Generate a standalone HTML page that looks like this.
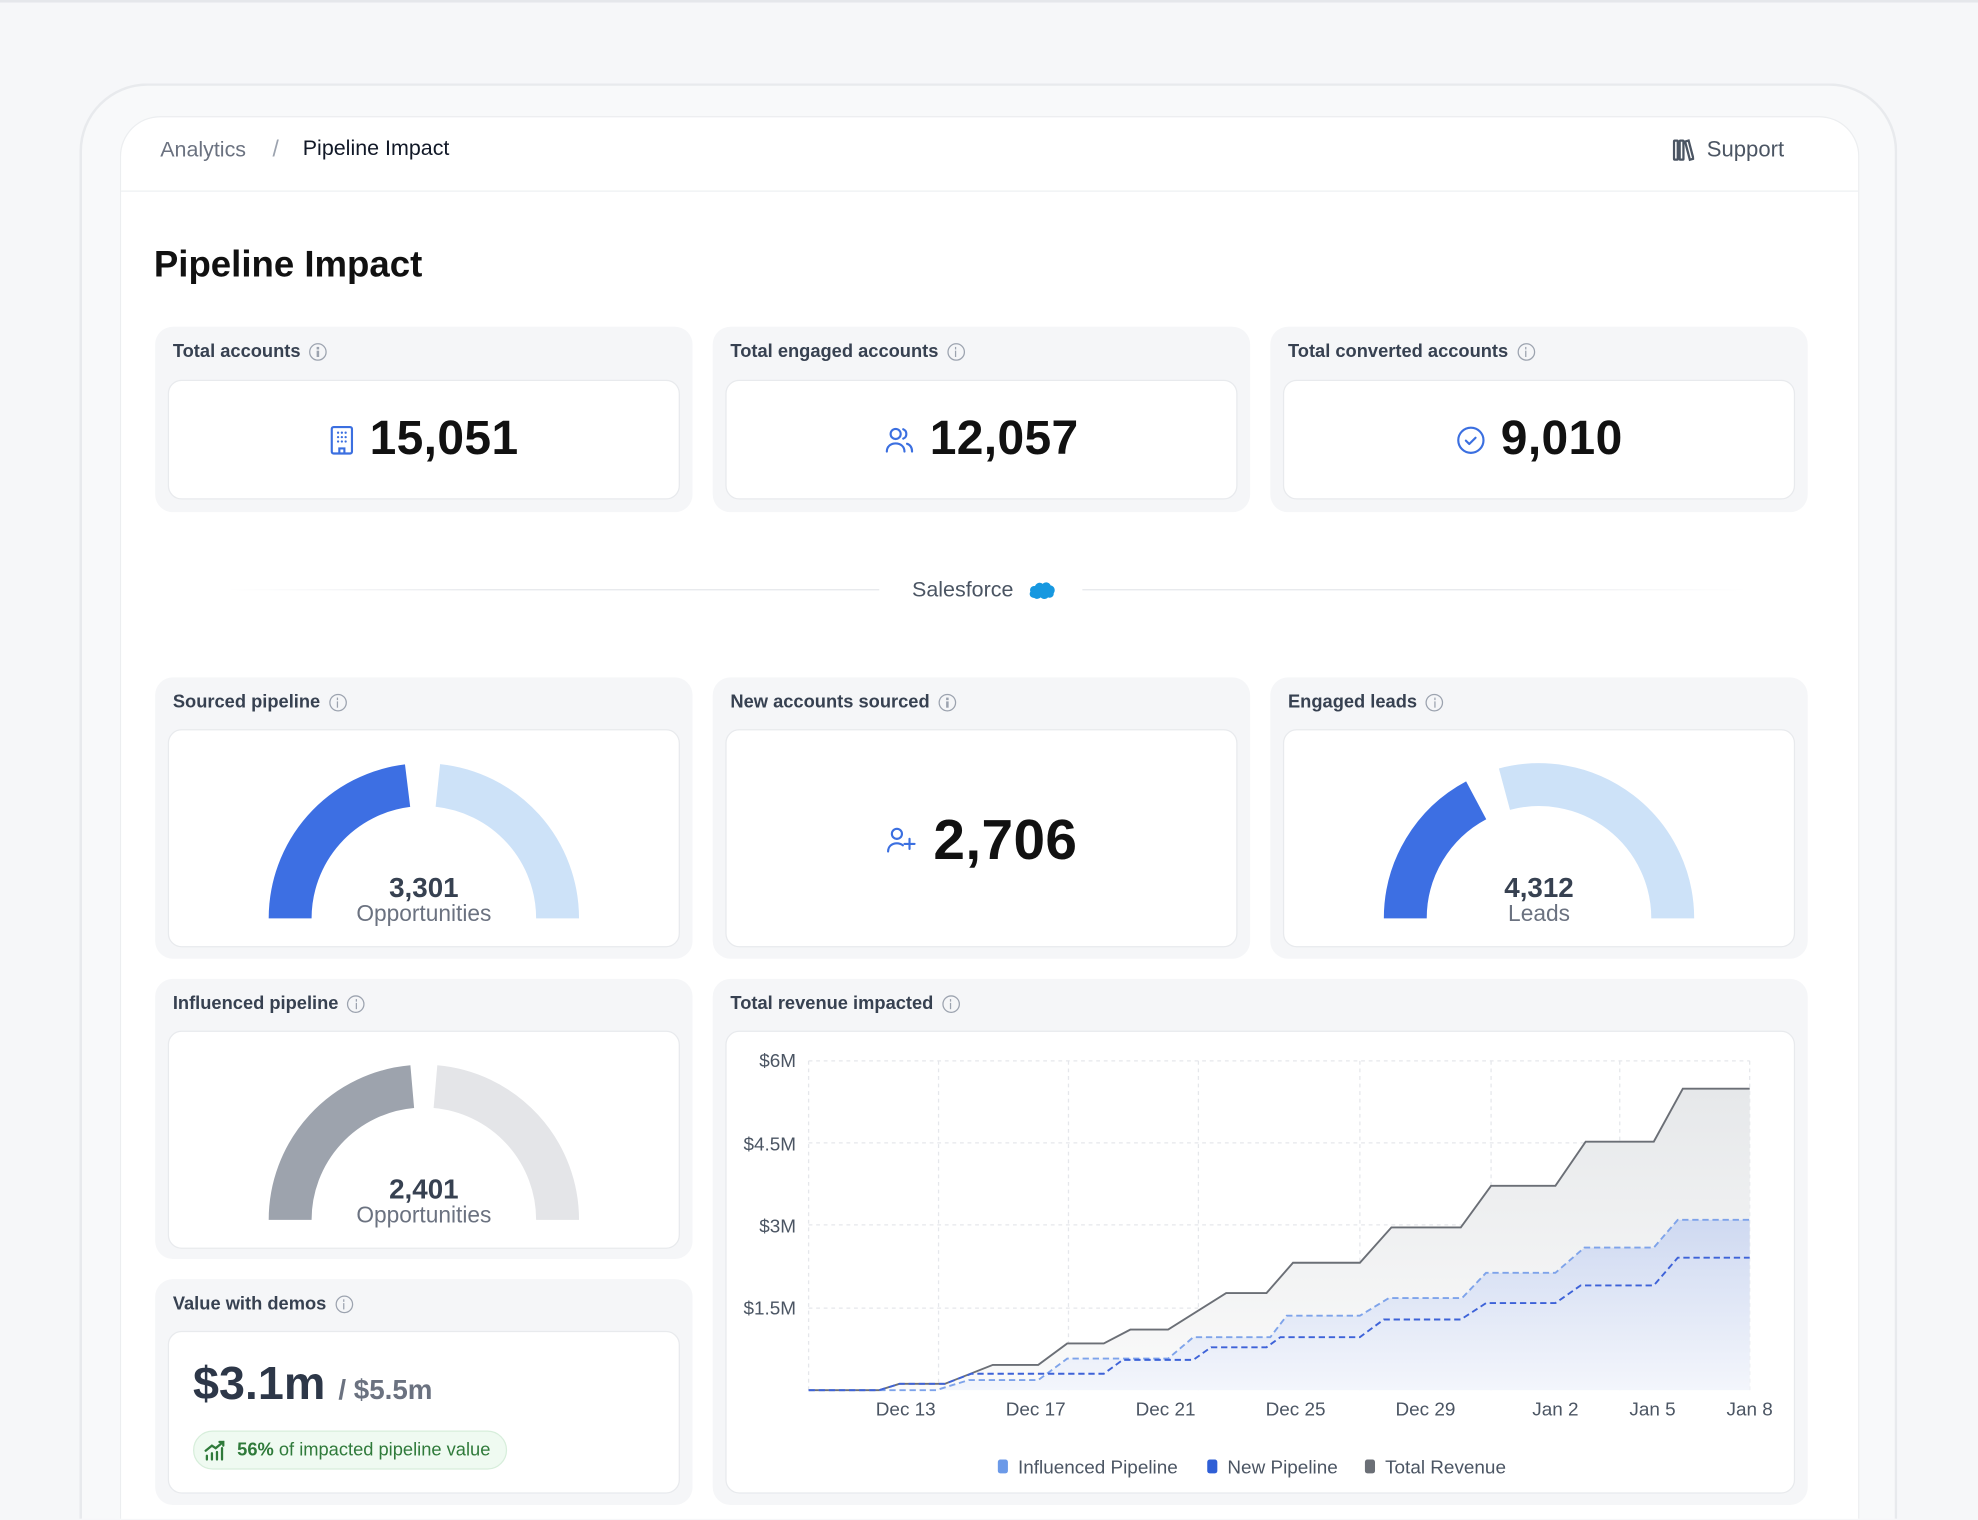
<!DOCTYPE html>
<html><head><meta charset="utf-8">
<style>
*{box-sizing:border-box;margin:0;padding:0}
html,body{width:1978px;height:1520px;overflow:hidden;background:#f6f7f9;font-family:"Liberation Sans",sans-serif;color:#111827}
#w{position:absolute;left:0;top:0;width:1568px;height:1204px;overflow:hidden;transform:scale(1.26148);transform-origin:0 0;background:#f6f7f9}
.abs{position:absolute}
.frame{left:63px;top:66px;width:1441px;height:1138px;border:2px solid #e8eaed;border-bottom:none;border-radius:54px 54px 0 0;background:#f8f9fa}
.inner{left:95px;top:92px;width:1379px;height:1112px;border:1.5px solid #eceef0;border-bottom:none;border-radius:32px 32px 0 0;background:#fff}
.hdr{left:96px;top:151px;width:1377px;height:1px;background:#eef0f2}
.card{position:absolute;background:#f5f6f8;border-radius:14px}
.lbl{position:absolute;left:14px;top:12px;font-size:14.5px;font-weight:700;color:#374151;display:flex;align-items:center;gap:7px;white-space:nowrap}
.box{position:absolute;left:10px;right:10px;background:#fff;border:1px solid #e8eaed;border-radius:11px}
.info{width:14px;height:14px;border:1.3px solid #9ca3af;border-radius:50%;position:relative;display:inline-block}
.info:after{content:"";position:absolute;left:5.2px;top:5px;width:1.4px;height:5px;background:#9ca3af}
.info:before{content:"";position:absolute;left:5.2px;top:2.4px;width:1.4px;height:1.4px;background:#9ca3af}
.num{position:absolute;left:0;right:0;display:flex;justify-content:center;align-items:center;gap:12px;font-size:38px;font-weight:700;color:#111;letter-spacing:0.3px}
.gt{position:absolute;left:0;right:0;text-align:center}
.gt b{display:block;font-size:22px;color:#374151;line-height:22px}
.gt span{display:block;font-size:18px;color:#6b7280;line-height:18px}
</style></head><body><div id="w">
<div class="abs" style="left:0;top:0;width:1568px;height:2px;background:#e5e7eb"></div>
<div class="abs frame"></div>
<div class="abs inner"></div>
<div class="abs hdr"></div>
<div class="abs" style="left:127px;top:109px;font-size:17px;color:#6b7280">Analytics</div>
<div class="abs" style="left:216px;top:108px;font-size:18px;color:#9ca3af">/</div>
<div class="abs" style="left:240px;top:108px;font-size:17px;color:#111827">Pipeline Impact</div>
<svg class="abs" style="left:1326px;top:110px" width="17" height="18" viewBox="0 0 17 18"><g fill="none" stroke="#4b5563" stroke-width="1.8"><rect x="1" y="1.5" width="3" height="15" rx=".5"/><rect x="5.5" y="1.5" width="3" height="15" rx=".5"/><path d="M9.8 2.2l2.8-.8 3.8 14.4-2.8.8z"/></g></svg>
<div class="abs" style="left:1353px;top:108px;font-size:17.5px;color:#4b5563">Support</div>
<div class="abs" style="left:122px;top:194px;font-size:29px;font-weight:700;color:#111">Pipeline Impact</div>

<div class="card" style="left:123px;top:259px;width:426px;height:147px"><div class="lbl">Total accounts <i class="info"></i></div>
<div class="box" style="top:42px;height:95px"><div class="num" style="top:25px">
<svg width="20" height="24" viewBox="0 0 20 24"><g fill="none" stroke="#3b6fe0" stroke-width="1.7"><rect x="2" y="1.5" width="16" height="21" rx="1.5"/><path d="M8 22.5v-4h4v4"/></g><g fill="#3b6fe0"><circle cx="7" cy="6" r=".9"/><circle cx="10" cy="6" r=".9"/><circle cx="13" cy="6" r=".9"/><circle cx="7" cy="9.5" r=".9"/><circle cx="10" cy="9.5" r=".9"/><circle cx="13" cy="9.5" r=".9"/><circle cx="7" cy="13" r=".9"/><circle cx="10" cy="13" r=".9"/><circle cx="13" cy="13" r=".9"/></g></svg>15,051</div></div></div>
<div class="card" style="left:565px;top:259px;width:426px;height:147px"><div class="lbl">Total engaged accounts <i class="info"></i></div>
<div class="box" style="top:42px;height:95px"><div class="num" style="top:25px">
<svg width="24" height="24" viewBox="0 0 24 24"><g fill="none" stroke="#3b6fe0" stroke-width="1.7" stroke-linecap="round"><circle cx="9" cy="7" r="4"/><path d="M2 21c0-4 3-6.5 7-6.5s7 2.5 7 6.5"/><path d="M15 3.3a4 4 0 0 1 0 7.4M18 14.8c2.4.8 4 3 4 6.2"/></g></svg>12,057</div></div></div>
<div class="card" style="left:1007px;top:259px;width:426px;height:147px"><div class="lbl">Total converted accounts <i class="info"></i></div>
<div class="box" style="top:42px;height:95px"><div class="num" style="top:25px">
<svg width="24" height="24" viewBox="0 0 24 24"><g fill="none" stroke="#3b6fe0" stroke-width="1.7" stroke-linecap="round" stroke-linejoin="round"><circle cx="12" cy="12" r="10"/><path d="M8 12.3l2.7 2.7 5-5"/></g></svg>9,010</div></div></div>

<div class="abs" style="left:180px;top:467px;width:517px;height:1px;background:linear-gradient(90deg,rgba(229,231,235,0),#e5e7eb 40%)"></div>
<div class="abs" style="left:858px;top:467px;width:527px;height:1px;background:linear-gradient(90deg,#e5e7eb 60%,rgba(229,231,235,0))"></div>
<div class="abs" style="left:723px;top:458px;font-size:17px;color:#4b5563">Salesforce</div>
<svg class="abs" style="left:815px;top:460px" width="22" height="16" viewBox="0 0 22 16"><path d="M5 14C1.5 14 .5 11 1.8 9 .8 6.5 3 4 5.5 4.6 6.5 2 9.5 1.2 11.5 2.8 13.5 .8 17 1.5 17.8 4 21 4.5 22 8 20.3 10.3 20.5 13 18 14.5 15.8 13.6 14 15.5 11 15 10 13.6 8.5 15 6 15 5 14z" fill="#1798e0"/></svg>

<div class="card" style="left:123px;top:537px;width:426px;height:223px"><div class="lbl">Sourced pipeline <i class="info"></i></div>
<div class="box" style="top:41px;height:173px"></div></div>
<div class="card" style="left:565px;top:537px;width:426px;height:223px"><div class="lbl">New accounts sourced <i class="info"></i></div>
<div class="box" style="top:41px;height:173px"><div class="num" style="top:61px;font-size:45px">
<svg width="26" height="24" viewBox="0 0 26 24"><g fill="none" stroke="#3b6fe0" stroke-width="1.7" stroke-linecap="round"><circle cx="9" cy="7" r="4"/><path d="M2 21c0-4 3-6.5 7-6.5 2 0 3.5.6 4.7 1.6"/><path d="M19 11v8M15 15h8"/></g></svg>2,706</div></div></div>
<div class="card" style="left:1007px;top:537px;width:426px;height:223px"><div class="lbl">Engaged leads <i class="info"></i></div>
<div class="box" style="top:41px;height:173px"></div></div>

<div class="card" style="left:123px;top:776px;width:426px;height:222px"><div class="lbl">Influenced pipeline <i class="info"></i></div>
<div class="box" style="top:41px;height:173px"></div></div>
<div class="card" style="left:123px;top:1014px;width:426px;height:179px"><div class="lbl">Value with demos <i class="info"></i></div>
<div class="box" style="top:41px;height:129px">
<div class="abs" style="left:19px;top:20px;font-size:37px;font-weight:700;color:#2d3748;white-space:nowrap">$3.1m <span style="font-size:22px;color:#6b7280;font-weight:700">/ $5.5m</span></div>
<div class="abs" style="left:19px;top:78px;height:31px;padding:0 12px 0 8px;border:1px solid #d7eedb;background:#effaf1;border-radius:16px;display:flex;align-items:center;gap:8px;font-size:14.5px;color:#2f7a3a;white-space:nowrap">
<svg width="18" height="16" viewBox="0 0 18 16"><g stroke="#2f7a3a" stroke-width="1.8" fill="none" stroke-linecap="round"><path d="M2 15v-3M6 15v-5M10 15v-6M14 15v-9"/><path d="M1 8l5-4 3 2 6-5M12 1h3v3"/></g></svg><span><b>56%</b> of impacted pipeline value</span></div>
</div></div>
<div class="card" style="left:565px;top:776px;width:868px;height:417px"><div class="lbl">Total revenue impacted <i class="info"></i></div>
<div class="box" style="top:41px;height:367px"></div></div>

<svg class="abs" style="left:0;top:0" width="1568" height="1204" viewBox="0 0 1568 1204">
<g fill="none" stroke-width="34">
<path d="M230 728A106 106 0 0 1 323.1 622.8" stroke="#3d6fe3"/>
<path d="M347.1 622.6A106 106 0 0 1 442 728" stroke="#cde2f8"/>
<path d="M1114 728A106 106 0 0 1 1170.2 634.4" stroke="#3d6fe3"/>
<path d="M1192.6 625.6A106 106 0 0 1 1326 728" stroke="#cde2f8"/>
<path d="M230 967A106 106 0 0 1 326.8 861.4" stroke="#9da3ad"/>
<path d="M345.2 861.4A106 106 0 0 1 442 967" stroke="#e4e5e8"/>
</g>
<defs>
<linearGradient id="gg" x1="0" y1="0" x2="0" y2="1"><stop offset="0" stop-color="#e6e8ea"/><stop offset="1" stop-color="#fafafa"/></linearGradient>
<linearGradient id="bg" x1="0" y1="0" x2="0" y2="1"><stop offset="0" stop-color="#c9d5f1"/><stop offset="1" stop-color="#f2f5fc"/></linearGradient>
</defs>
<g stroke="#e5e7eb" stroke-width="1" stroke-dasharray="3 3">
<path d="M641 841H1387M641 906H1387M641 971H1387M641 1037H1387"/>
<path d="M744 841V1102M847 841V1102M950 841V1102M1078 841V1102M1182 841V1102M1284 841V1102M1387 841V1102M641 841V1102"/>
</g>
<path d="M641 1102L697 1102 713 1097 749 1097 787 1082 823 1082 846 1065 875 1065 896 1054 926 1054 972 1025 1004 1025 1025 1001 1078 1001 1103 973 1158 973 1182 940 1233 940 1257 905 1311 905 1334 863 1387 863V1102Z" fill="url(#gg)"/>
<path d="M641 1102L742 1102 768 1094 823 1094 846 1077 926 1077 946 1060 1007 1060 1020 1043 1078 1043 1101 1029 1159 1029 1178 1009 1233 1009 1256 989 1311 989 1330 967 1387 967V1102Z" fill="url(#bg)" opacity=".85"/>
<path d="M641 1102L697 1102 713 1097 749 1097 787 1082 823 1082 846 1065 875 1065 896 1054 926 1054 972 1025 1004 1025 1025 1001 1078 1001 1103 973 1158 973 1182 940 1233 940 1257 905 1311 905 1334 863 1387 863" fill="none" stroke="#6b6f76" stroke-width="1.5"/>
<path d="M641 1102L742 1102 768 1094 823 1094 846 1077 926 1077 946 1060 1007 1060 1020 1043 1078 1043 1101 1029 1159 1029 1178 1009 1233 1009 1256 989 1311 989 1330 967 1387 967" fill="none" stroke="#7ea3ea" stroke-width="1.5" stroke-dasharray="5 3"/>
<path d="M641 1102L697 1102 713 1097 749 1097 770 1089 875 1089 890 1078 946 1078 960 1068 1004 1068 1015 1060 1078 1060 1097 1046 1158 1046 1178 1033 1233 1033 1253 1019 1311 1019 1330 997 1387 997" fill="none" stroke="#3d62d8" stroke-width="1.5" stroke-dasharray="5 3"/>
<g font-family="Liberation Sans" font-size="15" fill="#4b5563" text-anchor="end">
<text x="631" y="846">$6M</text><text x="631" y="912">$4.5M</text><text x="631" y="977">$3M</text><text x="631" y="1042">$1.5M</text>
</g>
<g font-family="Liberation Sans" font-size="15" fill="#4b5563" text-anchor="middle">
<text x="718" y="1122">Dec 13</text><text x="821" y="1122">Dec 17</text><text x="924" y="1122">Dec 21</text><text x="1027" y="1122">Dec 25</text><text x="1130" y="1122">Dec 29</text><text x="1233" y="1122">Jan 2</text><text x="1310" y="1122">Jan 5</text><text x="1387" y="1122">Jan 8</text>
</g>
<g font-family="Liberation Sans" font-size="15" fill="#4b5563">
<rect x="791" y="1157" width="8" height="11" rx="2" fill="#6c9ae8"/><text x="807" y="1168">Influenced Pipeline</text>
<rect x="957" y="1157" width="8" height="11" rx="2" fill="#2f5fd6"/><text x="973" y="1168">New Pipeline</text>
<rect x="1082" y="1157" width="8" height="11" rx="2" fill="#6b6f76"/><text x="1098" y="1168">Total Revenue</text>
</g>
</svg>
<div class="gt abs" style="left:236px;width:200px;top:693px"><b>3,301</b><span>Opportunities</span></div>
<div class="gt abs" style="left:1120px;width:200px;top:693px"><b>4,312</b><span>Leads</span></div>
<div class="gt abs" style="left:236px;width:200px;top:932px"><b>2,401</b><span>Opportunities</span></div>
</div></body></html>
